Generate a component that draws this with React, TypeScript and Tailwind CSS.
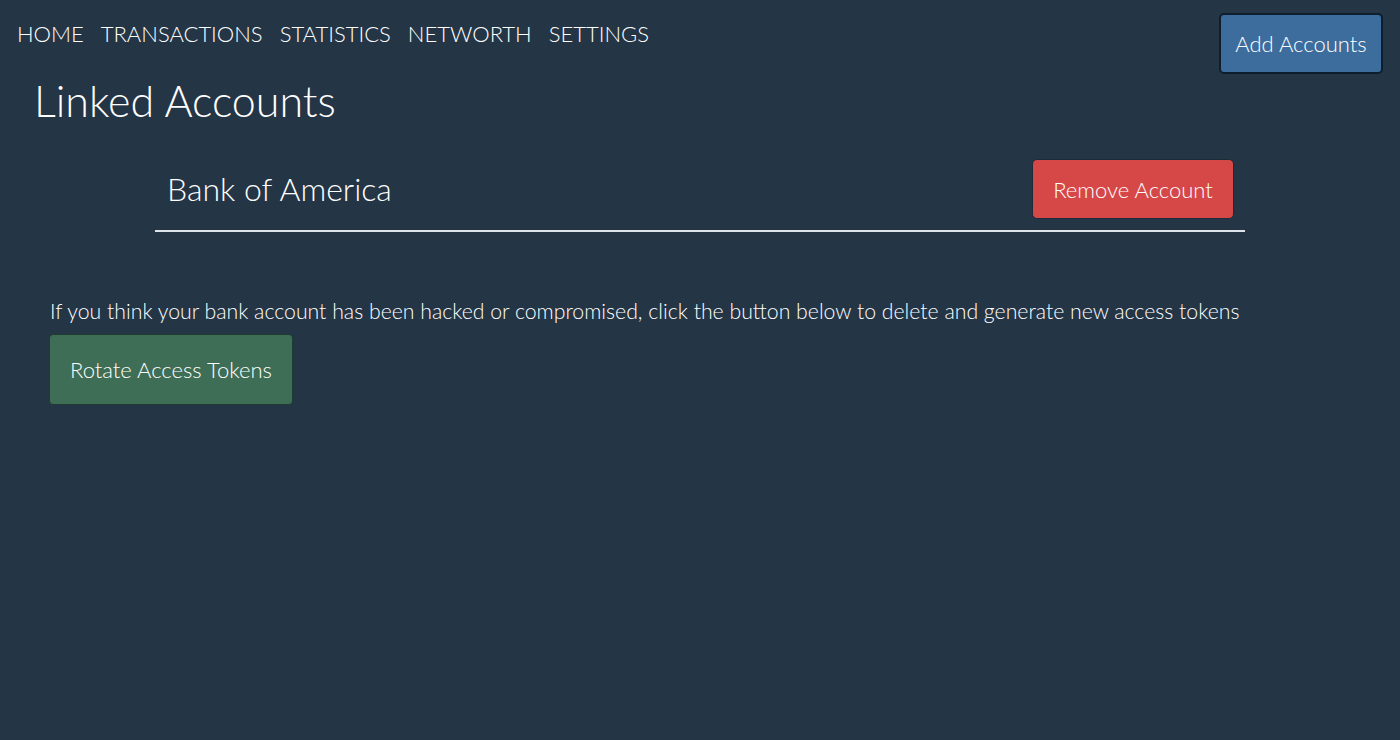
import React from "react";

const navItems = ["HOME", "TRANSACTIONS", "STATISTICS", "NETWORTH", "SETTINGS"];

export default function App() {
  return (
    <div
      className="min-h-[740px] w-full bg-[#243546] text-white"
      style={{ fontFamily: "Lato, 'Open Sans', sans-serif" }}
    >
      <div className="flex items-start justify-between pl-[17px] pr-[17px] pt-[13px]">
        <nav className="flex gap-[17px] pt-[8px] text-[22px] font-light leading-[26px]">
          {navItems.map((item) => (
            <a key={item} href="#" className="text-white">
              {item}
            </a>
          ))}
        </nav>
        <button className="h-[61px] w-[164px] rounded-[5px] border-2 border-[#0f1e2c] bg-[#3c6d9d] text-[22px] font-light">
          Add Accounts
        </button>
      </div>

      <h1 className="pl-[34px] text-[43px] font-light leading-[54px]">Linked Accounts</h1>

      <div className="mx-[155px] mt-[31px] flex items-center justify-between border-b-2 border-[#dfe4ea] pb-[11px] pl-[12px] pr-[11px]">
        <span className="text-[32px] font-light">Bank of America</span>
        <button className="h-[60px] w-[202px] rounded-[5px] border border-[#1c2b38] bg-[#d64848] text-[22px] font-light">
          Remove Account
        </button>
      </div>

      <div className="px-[50px] pt-[66px]">
        <p className="text-[21.25px] font-light leading-[26px]">
          If you think your bank account has been hacked or compromised, click the button below to delete and generate new
          access tokens
        </p>
        <button className="-ml-[1px] mt-[10px] h-[71px] w-[244px] rounded-[4px] border border-[#1f3a30] bg-[#3f6e56] text-[22px] font-light">
          Rotate Access Tokens
        </button>
      </div>
    </div>
  );
}
